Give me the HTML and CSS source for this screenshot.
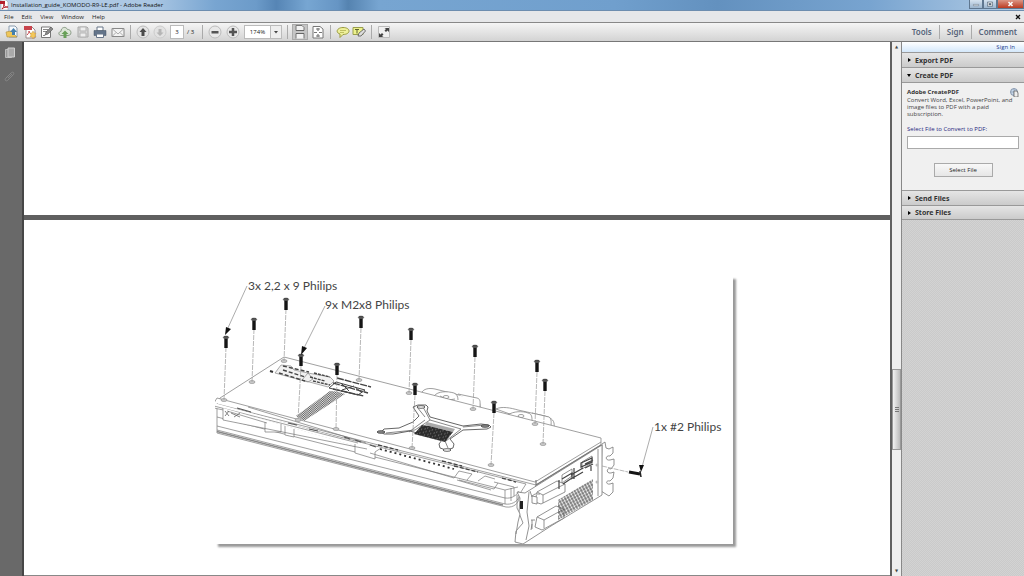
FILE: index.html
```html
<!DOCTYPE html>
<html lang="en">
<head>
<meta charset="utf-8">
<title>Installation_guide_KOMODO-R9-LE.pdf - Adobe Reader</title>
<link rel="stylesheet" href="styles.css">
</head>
<body>
<div class="app">
  <header class="titlebar">
    <svg class="app-icon" viewBox="0 0 9 10"><path d="M1 0h5l2 2v8H1z" fill="#fff" stroke="#999" stroke-width=".5"/><path d="M0 1h5v3H0z" fill="#b3202c"/><path d="M2 9c2-2 2-4 2-5 0 3 2 3 4 3-2 0-4 0-6 2z" fill="none" stroke="#b3202c"/></svg>
    <h1 class="title">Installation_guide_KOMODO-R9-LE.pdf - Adobe Reader</h1>
    <div class="window-buttons">
      <button class="win" aria-label="Minimize"><svg viewBox="0 0 14 8"><path d="M4 4.500h6v1.500H4z" fill="#fff" stroke="#456" stroke-width=".5"/></svg></button>
      <button class="win" aria-label="Restore"><svg viewBox="0 0 14 8"><path d="M5 2.500h4v3.500H5z" fill="none" stroke="#345" stroke-width="2"/><path d="M5 2.500h4v3.500H5z" fill="#567" stroke="#fff"/></svg></button>
      <button class="win win-close" aria-label="Close"><svg viewBox="0 0 24 8"><path d="M10 2l4 4m0-4l-4 4" stroke="#fff" stroke-width="1.500"/></svg></button>
    </div>
  </header>
  <nav class="menubar">
    <button>File</button><button>Edit</button><button>View</button><button>Window</button><button>Help</button>
    <button class="doc-close" aria-label="Close document"><svg viewBox="0 0 6 6"><path d="M1 1l4 4m0-4L1 5" stroke="#111" stroke-width="1.300"/></svg></button>
  </nav>
  <div class="toolbar">
    <div class="group files">
      <button aria-label="Open"><svg viewBox="0 0 14 14"><path d="M4 1h6l2 2v9H4z" fill="#f5f9fd" stroke="#8a9cae"/><path d="M1 7l5-1 6 6H2z" fill="#efc75a" stroke="#ac8d3d" stroke-width=".6"/><path d="M7 10V7H5l3.500-4L12 7h-2v3z" fill="#447fac"/></svg></button>
      <button aria-label="Create PDF"><svg viewBox="0 0 14 14"><path d="M3 2h6l3 3v8H3z" fill="#fff" stroke="#9a8888"/><path d="M1 1h8v4H1z" fill="#c7444c"/><path d="M4 10c2-2 2-3 2-4 0 2 2 3 3 3" fill="none" stroke="#c7444c"/><path d="M10 6l1 2 2 0-1 2 1 2-2 0-1 2-1-2-2 0 1-2-1-2 2 0z" fill="#f5c858" stroke="#b58a31" stroke-width=".4"/></svg></button>
      <button aria-label="Fill and sign"><svg viewBox="0 0 14 14"><path d="M1.500 2h9v10.500h-9z" fill="#fff" stroke="#777"/><path d="M3 4.500h5M3 6.500h4M3 10.500h2" stroke="#888"/><path d="M5 10l1-3 5-5 2 2-5 5z" fill="#888" stroke="#555" stroke-width=".6"/></svg></button>
      <button aria-label="Upload"><svg viewBox="0 0 14 14"><path d="M4 10.500C0 11 0 6.500 3 6.500 3 2 8 1 9.500 4.500c4-.500 5 6 .500 6z" fill="#dce6d7" stroke="#8b9b87"/><path d="M5.500 13V9h-2L7 5.500 10.500 9h-2v4z" fill="#68a058"/></svg></button>
      <button aria-label="Save" disabled><svg viewBox="0 0 14 14"><path d="M2 2h9l1 1v9H2z" fill="#d5d5d5" stroke="#aaa"/><path d="M4 2h6v4H4zM4 8h6v4H4z" fill="#eee" stroke="#b5b5b5"/></svg></button>
      <button aria-label="Print"><svg viewBox="0 0 14 14"><path d="M4 2h6v4H4z" fill="#fff" stroke="#667487"/><path d="M1 5.500h12v5H1z" fill="#63748a" stroke="#455161" stroke-width=".5"/><path d="M3.500 9h7v3.500h-7z" fill="#fff" stroke="#68768a"/></svg></button>
      <button aria-label="Email"><svg viewBox="0 0 14 14"><path d="M1 3.500h12v8H1z" fill="#f3f3f3" stroke="#888"/><path d="M1 3.500L7 9l6-5.500M1 11.500l4-4m8 4l-4-4" fill="none" stroke="#999" stroke-width=".8"/></svg></button>
    </div>
    <div class="group paging">
      <button aria-label="Previous page"><svg viewBox="0 0 14 14"><circle cx="7" cy="7" r="6" fill="#e4e4e4" stroke="#bbb"/><path d="M5.500 11V7H3.500L7 3l3.500 4h-2v4z" fill="#4b4b4b"/></svg></button>
      <button aria-label="Next page" disabled><svg viewBox="0 0 14 14"><circle cx="7" cy="7" r="6" fill="#e2e2e2" stroke="#ccc"/><path d="M5.500 4v3.500h-2L7 11l3.500-3.500h-2V4z" fill="#b5b5b5"/></svg></button>
      <input class="page-number" aria-label="Page number" value="3">
      <span class="page-total">/ 3</span>
    </div>
    <div class="group zoom">
      <button aria-label="Zoom out"><svg viewBox="0 0 14 14"><circle cx="7" cy="7" r="6" fill="#e8e8e8" stroke="#bbb"/><path d="M3.500 6h7v2.500h-7z" fill="#555"/></svg></button>
      <button aria-label="Zoom in"><svg viewBox="0 0 14 14"><circle cx="7" cy="7" r="6" fill="#e8e8e8" stroke="#bbb"/><path d="M3 7h8M7 3v8" stroke="#555" stroke-width="2.500"/></svg></button>
      <div class="zoom-field"><input aria-label="Zoom level" value="174%"><button aria-label="Zoom presets"><svg viewBox="0 0 8 12"><path d="M2 5h4L4 7.500z" fill="#444"/></svg></button></div>
    </div>
    <div class="group fit">
      <button class="pressed" aria-label="Scrolling pages"><svg viewBox="0 0 14 14"><path d="M3 .5h6l2 2v3H3zM3 13.500v-5h8v5" fill="#f2f2f2" stroke="#777"/><path d="M3 5.500h8M3 8.500h8" stroke="#666"/></svg></button>
      <button aria-label="Fit page"><svg viewBox="0 0 14 14"><path d="M2 1.500h7L12 4v9H2z" fill="#fff" stroke="#777"/><path d="M7 3v3m0 3v3M3 7.500h3m2 0h3M5 4h4M5 11h4" stroke="#777" stroke-width="1.200"/></svg></button>
    </div>
    <div class="group comments">
      <button aria-label="Sticky note"><svg viewBox="0 0 14 14"><path d="M7 2.500c8 0 8 7 0 7l-3 3V9C-1 7.500 1 2.500 7 2.500z" fill="#eef09a" stroke="#999a3e"/><path d="M4 5.500h6M4 7.500h4" stroke="#aaa94b" stroke-width=".7"/></svg></button>
      <button aria-label="Highlight text"><svg viewBox="0 0 14 14"><path d="M1 2.500h10v7H1z" fill="#edf28c" stroke="#999e4c"/><path d="M3 4.500h4M5 4.500v4" stroke="#5e6333"/><path d="M6 11l1-3 5-4 1.500 2-4.500 5z" fill="#ddd" stroke="#555" stroke-width=".8"/></svg></button>
    </div>
    <div class="group">
      <button aria-label="Read mode"><svg viewBox="0 0 14 14"><path d="M1.500 1.500h11v11h-11z" fill="#f0f0f0" stroke="#bbb"/><path d="M12 3v4L10.500 5.500 9 7 7.500 5.500 9 4 7.500 3zM2 12V8l1.500 1.500L5 8l1.500 1.500L5 11l1.500 1z" fill="#444"/></svg></button>
    </div>
    <div class="tasks"><button>Tools</button><button>Sign</button><button>Comment</button></div>
  </div>
  <div class="workspace">
    <aside class="rail">
      <button aria-label="Page thumbnails"><svg viewBox="0 0 12 12"><path d="M1.500 2.500h6v8h-6z" fill="#999" stroke="#bbb"/><path d="M4 1h6.500v9H4z" fill="#aaa" stroke="#d0d0d0"/></svg></button>
      <button aria-label="Attachments"><svg viewBox="0 0 12 12"><path d="M2 8l5-5c2-2 4 0 2 2l-5 5c-2 2-4 0-2-2l5-5M4 8l4-4" fill="none" stroke="#888" stroke-width=".9"/></svg></button>
    </aside>
    <main class="document">
      <section class="page page-upper" aria-label="Page 2"></section>
      <section class="page page-lower" aria-label="Page 3">
        <figure class="diagram">
          <svg viewBox="215 276 518 268" role="img" aria-label="Exploded view of a graphics card">
            <defs>
              <g id="screw"><ellipse cx="0" cy="1.500" rx="2.700" ry="1.400" fill="#555" stroke="#222" stroke-width=".5"/><path d="M-1.700 3h3.400v9h-3.400z" fill="#151515"/></g>
              <ellipse id="hole" rx="3" ry="1.500" fill="#ccc" stroke="#888" stroke-width=".6"/>
              <pattern id="vent" width="3" height="3" patternUnits="userSpaceOnUse" patternTransform="rotate(-28)"><path d="M0 1h2.500M1 0v3" stroke="#555" stroke-width="1"/></pattern>
              <pattern id="ribs" width="1.500" height="4" patternUnits="userSpaceOnUse" patternTransform="rotate(50)"><path d="M0 0v4" stroke="#666" stroke-width="1.500"/></pattern>
              <pattern id="chip" width="5" height="4" patternUnits="userSpaceOnUse" patternTransform="rotate(25)"><path d="M0 0h5v4H0z" fill="#2c2c2c"/><path d="M1 1h1M3 3h1" stroke="#aaa" stroke-width=".8"/></pattern>
            </defs>
            <g fill="#fff" stroke="#777" stroke-width=".7" stroke-linejoin="round">
              <path d="M421 394c2-6 9-6 14-5l36 9c6 1 9 3 9 9v4z"/>
              <path d="M434 396c4-5 13-5 20-3 3 1 4 4 4 7M440 396l8 4 7-1M458 394l19 4c4 1 3 5 3 9"/>
              <ellipse cx="446" cy="397" rx="3" ry="1.500"/>
              <path d="M496 409c6-3 15-1 22 1l27 6c7 2 10 5 9 11v3z"/>
              <path d="M508 415c5-4 15-4 20-2 4 1 4 4 4 8M532 413l17 4c3 2 2 6 2 10"/>
              <ellipse cx="521" cy="416" rx="3" ry="1.500"/>
              <path d="M217 406V433l289 74c8 1 14-4 13-12l7-11z"/>
              <path d="M217 417l288 73 13-3M217 426l288 72c7 1 12-3 14-7M217 430l288 74c6 1 12-2 14-7"/>
              <path d="M217 431.500l286 73.500" stroke-width="1.300" stroke="#888"/>
              <path d="M505 490v14M511 488v13"/>
              <path d="M220 398L284 357 601 438v7L536 485 217 404z"/>
              <path d="M214 403l3-5 318 84 66-40M214 403v5l28 6 122 35 6-3M214 406l144 37M248 407l118 36"/>
              <path d="M536 485l65-40M536 480v8" stroke-width="1.200"/>
              <path d="M223 408v12l144 29M227 411l40 12M265 422v10h16v-8M285 426v9l9 2v-8M355 444v9l20 6v-7l6-4"/>
            </g>
            <path d="M237 408l14 4m37 11l9 2m12 4l9 2m26 6l6 2m5 1l6 2m9 3l6 2" stroke="#555" stroke-width="1.200"/>
            <path d="M225 411l4 5m0-5l-4 5m6-3l9 4m0-4l-6 4" stroke="#666" stroke-width=".8"/>
            <path d="M380 449l74 20" stroke="#333" stroke-width="1.800" stroke-dasharray="2 3"/>
            <path d="M378 445l20 5m56 16l24 6m-36-11l20 5m40 12l14 4" stroke="#444" stroke-width="1.300" stroke-dasharray="4 2"/>
            <path d="M370 453l84 25 5-7 13 3-5 6m-8 0l35 9 4-6m-20-2l7-5 10 3m-38 1l34 10m3-8l20 5v9" fill="none" stroke="#777" stroke-width=".7"/>
            <path d="M275 373l6-8 10 1 3 4 14 3 5 6-5 3zM302 380l6-7 22 4 4 4-6 6z" fill="#f1f1f1" stroke="#888" stroke-width=".7"/>
            <g fill="none" stroke="#444" stroke-width="1.400">
              <path d="M283 366l26 6m-30 1l26 8m-22-11l22 7" stroke-dasharray="4 2"/>
              <path d="M314 373l16 4m-17 4l17 4m-20-8l15 4" stroke-dasharray="3 1"/>
              <path d="M337 378l34 9m-38-4l35 10m-35-4l31 7" stroke-dasharray="7 1"/>
            </g>
            <path d="M336 382l29 8-7 5-29-7zM342 384l7 7m5-5l-12 4m13-3l6 5" fill="none" stroke="#444" stroke-width="1"/>
            <path d="M270 371l3 1" stroke="#333" stroke-width="2"/>
            <path d="M296 416l34-25q8 0 15 3l-41 27z" fill="#ddd"/>
            <path d="M296 416l34-25q8 0 15 3l-41 27z" fill="url(#ribs)"/>
            <g fill="#fff" stroke="#555" stroke-width=".9" stroke-linejoin="round">
              <path d="M413 407l5-2h8l2 2-1 4 3 6 33 9 18-2 8 1 2 2-4 2-24 1-13 9 4 5-1 4-7 2-6-2-1-4 3-4-32-9-17 3h-9l-3-2 3-3 15-1 14-6 6-6z"/>
              <path d="M417 407l8 10m-2-10l7 13-15 10-29 3M430 420l31 9-15 12M463 427l22-2M445 441l3 7M409 432l16-12" fill="none" stroke-width=".7"/>
              <ellipse cx="421" cy="407" rx="4" ry="1.300"/><ellipse cx="381" cy="432" rx="4" ry="1.300" fill="#888"/><ellipse cx="485" cy="426" rx="4" ry="1.300" fill="#888"/><ellipse cx="447" cy="450" rx="4" ry="1.300"/>
            </g>
            <path d="M427 422l28 7-2 3-28-7z" fill="#aaa"/>
            <path d="M422 425l7 1 24 6-8 10-31-8z" fill="url(#chip)"/>
            <g fill="#fff" stroke="#777" stroke-width=".8" stroke-linejoin="round">
              <path d="M602 444l3-2 1 6 3 1 4-2v6l-3 3c-5-1-5 5 0 4l4-1v6l-3 4c-5-2-5 5 0 4l3-1-1 6-3 3c-5-1-4 4 0 3l3-1v9l-4 4-8-5z"/>
              <path d="M525 493l77-48v50l-51 31-28 18-8-2 1-11 7-8-4-10 1-15-3-6z"/>
              <path d="M517 495v13l3 6-2 8-2 12M529 492l-2 20 2 14-3 14M598 449v47"/>
              <path d="M530 491l2 6m0 27l-1 6" fill="none"/>
              <path d="M537 492l20-11 8 3v8l-24 12-6-2z"/><path d="M537 492l6 3v8m0-8l22-11M532 496v7l5 1v-7zM532 496l3-2h5"/>
              <path d="M537 517l19-11 8 3v9l-22 12-7-3z"/><path d="M537 517l7 3v8m0-8l20-11m-32 11v9m-1-9h4"/>
              <path d="M562 475l10-6v7l-10 7zM582 462l10-6v7l-10 6z"/>
            </g>
            <path d="M558 500l35-21v21l-35 20z" fill="url(#vent)"/>
            <path d="M521.500 501v8" stroke="#222" stroke-width="3"/>
            <path d="M581 463l11-5v4l-11 5zM559 480v9m3-10l10-6v5l-9 6m11-16v11m-3-4l12-7m-12 11l12-7m2-8l8-4m-8 8l8-4m-2 7v-5" fill="none" stroke="#444" stroke-width="1.200"/>
            <circle cx="597" cy="465" r="1.500" fill="#bbb"/><circle cx="597" cy="482" r="1.500" fill="#bbb"/>
            <g><use href="#hole" x="224" y="400"/><use href="#hole" x="252" y="382"/><use href="#hole" x="284" y="361"/><use href="#hole" x="359" y="380"/><use href="#hole" x="298" y="420"/><use href="#hole" x="336" y="429"/><use href="#hole" x="409" y="393"/><use href="#hole" x="473" y="409"/><use href="#hole" x="535" y="424"/><use href="#hole" x="543" y="444"/><use href="#hole" x="412" y="448"/><use href="#hole" x="491" y="465"/></g>
            <path d="M226 347l-2 53M254 329l-2 53M286 309l-2 52M361 328l-2 52M301 366l-3 54M337 375l-1 54M411 340l-2 53M475 357l-2 52M537 372l-2 52M545 391l-2 53M415 395l-3 53M494 413l-3 52M602 466l26 6" fill="none" stroke="#999" stroke-width=".7" stroke-dasharray="5 1"/>
            <g><use href="#screw" x="226" y="336"/><use href="#screw" x="254" y="318"/><use href="#screw" x="286" y="298"/><use href="#screw" x="361" y="316"/><use href="#screw" x="301" y="354"/><use href="#screw" x="337" y="363"/><use href="#screw" x="411" y="328"/><use href="#screw" x="475" y="345"/><use href="#screw" x="537" y="360"/><use href="#screw" x="545" y="379"/><use href="#screw" x="415" y="383"/><use href="#screw" x="494" y="401"/></g>
            <path d="M629 472l11 2" stroke="#151515" stroke-width="3"/><path d="M640 471l1 6" stroke="#222" stroke-width="1.500"/>
            <path d="M247 286l-20 44M325 306l-22 44M653 427l-11 40" stroke="#888" stroke-width=".7"/>
            <path d="M226 327l5 2-6 6zM302 346l5 2-6 7zM639 465h5l-3 7z" fill="#111"/>
            <g class="callout"><text x="248" y="290">3x 2,2 x 9 Philips</text><text x="325" y="309">9x M2x8 Philips</text><text x="654" y="431">1x #2 Philips</text></g>
          </svg>
        </figure>
      </section>
    </main>
    <div class="scrollbar" aria-hidden="true"><span class="arrow">▲</span><span class="thumb"></span><span class="arrow">▼</span></div>
    <aside class="panel">
      <div class="signin"><a href="#signin">Sign In</a></div>
      <button class="section"><svg viewBox="0 0 4 4"><path d="M1 0l3 2-3 2z"/></svg>Export PDF</button>
      <button class="section" aria-expanded="true"><svg viewBox="0 0 4 4"><path d="M0 1h4L2 4z"/></svg>Create PDF</button>
      <form class="create">
        <div class="create-head"><h2>Adobe CreatePDF</h2><svg viewBox="0 0 9 9"><circle cx="4" cy="4" r="3.500" fill="#c8d8ea" stroke="#71849c" stroke-width=".8"/><path d="M1 4h6M4 1v6" stroke="#71849c" stroke-width=".5"/><path d="M4 3h3l1 2v4H4z" fill="#eee" stroke="#555" stroke-width=".7"/></svg></div>
        <p>Convert Word, Excel, PowerPoint, and image files to PDF with a paid subscription.</p>
        <label for="file">Select File to Convert to PDF:</label>
        <input id="file" type="text">
        <button type="button">Select File</button>
      </form>
      <button class="section"><svg viewBox="0 0 4 4"><path d="M1 0l3 2-3 2z"/></svg>Send Files</button>
      <button class="section"><svg viewBox="0 0 4 4"><path d="M1 0l3 2-3 2z"/></svg>Store Files</button>
    </aside>
  </div>
</div>
</body>
</html>
```

FILE: styles.css
```css
* { box-sizing: border-box; }
body { margin: 0; font-family: "Open Sans", "Noto Sans", sans-serif; font-size: 6px; color: #222; }
button, input { margin: 0; padding: 0; border: 0; background: none; font: inherit; color: inherit; }
svg { display: block; }
.app { display: flex; flex-direction: column; height: 100vh; overflow: hidden; }

.titlebar { display: flex; align-items: center; flex: none; height: 11px; gap: 2px; border-bottom: 1px solid #6d8daf;
  background: linear-gradient(90deg, #b9cfe6 0, #a9c6e3 15%, #78a5d1 21%, #6c9bc9 25%, #5685b5 27%, #77a6d2 30%, #6695c4 33%, #5583b0 34%, #77a5d1 37%, #709fcd 60%, #6391bf 70%, #78a4d0 85%, #a4c2e0 96%, #b5cde5 100%); }
.app-icon { width: 9px; height: 10px; }
.title { margin: 0; font-size: 6px; font-weight: 400; line-height: 10px; color: #111; }
.window-buttons { display: flex; align-self: flex-start; margin-left: auto; }
.win { width: 14px; height: 9px; border: 1px solid #5f7790; border-top: 0; background: linear-gradient(#d5e2ef, #9db6cf); }
.win svg { width: 100%; height: 8px; }
.win-close { width: 27px; background: linear-gradient(#dc9686, #bb3b22); }

.menubar { display: flex; align-items: center; flex: none; height: 11px; gap: 8px; padding: 0 3px 0 4px; background: #e6e7e9; }
.menubar button { line-height: 10px; }
.menubar .doc-close { width: 6px; margin-left: auto; }

.toolbar { display: flex; align-items: center; flex: none; height: 20px; padding-left: 5px; border-top: 1px solid #888; border-bottom: 1px solid #777; background: linear-gradient(#f5f5f5, #d3d3d3); }
.group { display: flex; align-items: center; justify-content: space-between; }
.group + .group { margin-left: 5px; padding-left: 5px; border-left: 1px solid #aaa; }
.group button { width: 14px; }
.group svg { width: 100%; }
.files { width: 120px; }
.paging { width: 67px; }
.zoom { width: 80px; }
.fit { width: 38px; }
.comments { width: 36px; }
.toolbar input { height: 14px; text-align: center; background: #fff; border: 1px solid #bbb; }
.page-number { width: 14px; }
.page-total { width: 10px; }
.zoom-field { display: flex; width: 38px; height: 14px; }
.zoom-field input { flex: 1; min-width: 0; }
.zoom-field button { width: 11px; border: 1px solid #bbb; border-left: 0; background: #eee; }
.zoom-field svg { height: 12px; }
.pressed { background: #c5c5c5; outline: 1px solid #aaa; }
.tasks { display: flex; margin-left: auto; font-family: "Noto Sans", sans-serif; font-size: 8px; font-weight: 600; color: #58657b; }
.tasks button { padding: 0 7px; line-height: 14px; }
.tasks button + button { border-left: 1px solid #aaa; }

.workspace { display: flex; flex: 1; min-height: 0; background: #606060; }
.rail { display: flex; flex-direction: column; align-items: center; flex: none; gap: 11px; width: 24px; padding: 5px 2px 0 0; border-right: 2px solid #464646; background: #696969; }
.rail button { width: 12px; height: 12px; }
.document { display: flex; flex: 1; flex-direction: column; gap: 5px; min-width: 0; margin-right: 2px; border-bottom: 1px solid #888; }
.page { background: #fff; }
.page-upper { height: 173px; }
.page-lower { flex: 1; padding: 56px 0 0 22%; }
.diagram { width: 518px; margin: 0; box-shadow: 3px 3px 2px #999; }
.callout { font-family: Lato, sans-serif; font-size: 12px; fill: #444; }

.scrollbar { display: flex; flex-direction: column; flex: none; width: 9px; background: #eee; }
.arrow { font-family: "DejaVu Sans", sans-serif; font-size: 4px; line-height: 10px; text-align: center; color: #444; }
.thumb { height: 81px; margin: auto 0 116px; border: 1px solid #999; background: repeating-linear-gradient(#777 0 1px, transparent 1px 2px) center / 4px 5px no-repeat, linear-gradient(90deg, #f2f2f2, #bbb); }

.panel { display: flex; flex-direction: column; flex: none; width: 123px; border-left: 1px solid #888; background: repeating-conic-gradient(#cacaca 0 25%, #d3d3d3 0 50%) 0 0 / 2px 2px; }
.signin { padding-right: 9px; text-align: right; line-height: 10px; background: linear-gradient(#fff, #d4e8fb); }
.signin a { color: #263e91; text-decoration: none; }
.section { display: flex; align-items: center; flex: none; gap: 4px; height: 15px; padding: 0 5px; border-top: 1px solid #999; background: linear-gradient(#e5e5e5, #cbcbcb); font-family: "Noto Sans", sans-serif; font-size: 7px; font-weight: 700; color: #333; }
.section svg { width: 4px; height: 4px; }
.section:last-child { border-bottom: 1px solid #999; }
.create { display: flex; flex-direction: column; padding: 5px 5px 13px; border-top: 1px solid #999; background: #f0f0f0; line-height: 7px; }
.create-head { display: flex; align-items: center; justify-content: space-between; }
.create-head svg { width: 9px; height: 9px; }
.create h2 { margin: 0; font-size: 6px; font-weight: 700; color: #333; }
.create p { margin: 0 0 8px; color: #444; }
.create label { color: #26267f; }
.create input { height: 13px; margin: 3px 0 14px; border: 1px solid #aaa; background: #fff; }
.create button { align-self: center; width: 59px; height: 14px; border: 1px solid #aaa; background: linear-gradient(#f8f8f8, #e6e6e6); }
```
